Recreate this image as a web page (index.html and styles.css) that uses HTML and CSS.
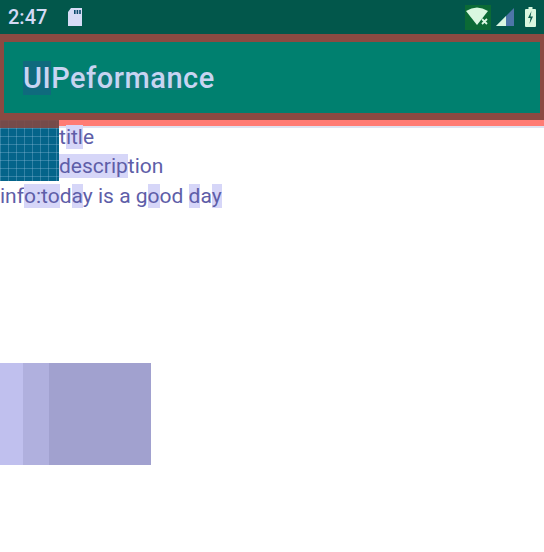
FILE: index.html
```html
<!DOCTYPE html>
<html>
<head>
<meta charset="utf-8">
<link rel="stylesheet" href="styles.css">
</head>
<body>
<div class="status">
  <span class="time">2:47</span>
  <svg class="sd" width="18" height="20" viewBox="0 0 18 20"><path d="M5 1h11v18H2V5z" fill="#d6dcf6"/><rect x="8" y="3" width="1.6" height="4" fill="#0b4a6b"/><rect x="10.6" y="3" width="1.6" height="4" fill="#0b4a6b"/><rect x="13.2" y="3" width="1.6" height="4" fill="#0b4a6b"/></svg>
  <span class="spacer"></span>
  <span class="wifi-box"><svg width="26" height="22" viewBox="0 0 26 22"><path d="M1 5 Q12 -2 23 5 L12 19 Z" fill="#d9f7e0"/><path d="M17 13 l5 5 M22 13 l-5 5" stroke="#d9f7e0" stroke-width="1.8"/></svg></span>
  <svg class="signal" width="20" height="20" viewBox="0 0 20 20"><path d="M1 19 L19 1 V19 Z" fill="#4d75a8"/><path d="M1 19 L11 9 V19 Z" fill="#d9f7e0"/></svg>
  <svg class="battery" width="11" height="20" viewBox="0 0 11 20"><rect x="3.5" y="0" width="4" height="2" fill="#d9f7e0"/><rect x="0" y="2" width="11" height="18" rx="1" fill="#d9f7e0"/><path d="M6.5 4 L3 11 H5.5 L4.5 17 L8 9.5 H5.5 Z" fill="#0a5b4c"/></svg>
</div>
<div class="appbar-frame">
  <div class="appbar"><span class="apptitle"><span class="hl">UI</span>P<span class="hl2">eforman</span>ce</span></div>
</div>
<div class="row">
  <div class="thumb"><div class="thumb-top"></div><div class="thumb-body"></div></div>
  <div class="col">
    <div class="band"></div>
    <div class="line title">t<span class="tx">itl</span>e</div>
    <div class="line desc"><span class="tx">descrip</span>tion</div>
  </div>
</div>
<div class="line info">inf<span class="tx">o:to</span>d<span class="tx">a</span>y is a g<span class="tx">o</span>od <span class="tx">d</span>a<span class="tx">y</span></div>
<div class="blocks">
  <div class="b1"></div>
  <div class="b2"></div>
  <div class="b3"></div>
</div>
</body>
</html>
```
FILE: styles.css
```css
html, body {
  margin: 0;
  padding: 0;
  background: #ffffff;
  width: 544px;
  height: 552px;
  overflow: hidden;
  font-family: Roboto, "Noto Sans", sans-serif;
}
.status {
  height: 34px;
  background: #02574b;
  display: flex;
  align-items: center;
  padding: 0 8px;
  box-sizing: border-box;
}
.time {
  color: #d3daf5;
  font-size: 20px;
  font-weight: 500;
  line-height: 22px;
  padding: 0 1px;
  margin-left: -1px;
}
.sd {
  margin-left: 18px;
}
.spacer { flex: 1; }
.wifi-box {
  display: flex;
  align-items: center;
  justify-content: center;
  background: #0b6a35;
  width: 26px;
  height: 25px;
  margin-right: 4px;
}
.signal { margin-right: 10px; }
.battery { margin-right: 0; }
.appbar-frame {
  background: #8b4a42;
  padding: 8px 4px 7px 4px;
}
.appbar {
  height: 71px;
  background: #00806f;
  display: flex;
  align-items: center;
  padding-left: 19px;
}
.apptitle {
  color: #c8d4f2;
  font-size: 29px;
  font-weight: 500;
  letter-spacing: 0.5px;
  line-height: 30px;
}
.apptitle .hl { background: #0f6a7d; }
.apptitle .hl2 { background: linear-gradient(#00806f 30%, #0d7a78 30%, #0d7a78 85%, #00806f 85%); }
.row {
  display: flex;
  height: 61px;
}
.thumb {
  width: 59px;
  display: flex;
  flex-direction: column;
  background-image:
    linear-gradient(90deg, rgba(160,200,230,0.3) 1px, transparent 1px),
    linear-gradient(rgba(160,200,230,0.3) 1px, transparent 1px);
  background-size: 8px 8px;
  background-color: #04648a;
}
.thumb-top {
  height: 8px;
  background: rgba(130, 72, 66, 0.9);
}
.thumb-body { flex: 1; }
.col {
  flex: 1;
  display: flex;
  flex-direction: column;
}
.band {
  height: 6px;
  background: #ff7c74;
  border-bottom: 2px solid #dfe2f0;
}
.line {
  color: #5e5ea8;
  font-size: 21px;
  line-height: 29px;
  white-space: nowrap;
}
.title { margin-top: -5px; }
.info { margin-top: 1px; }
.tx { background: #d6d6f8; }
.blocks {
  display: flex;
  margin-top: 152px;
  height: 102px;
}
.b1 { width: 23px; background: #c0c0ee; }
.b2 { width: 26px; background: #b0b0de; }
.b3 { width: 102px; background: #a1a1cf; }
```
